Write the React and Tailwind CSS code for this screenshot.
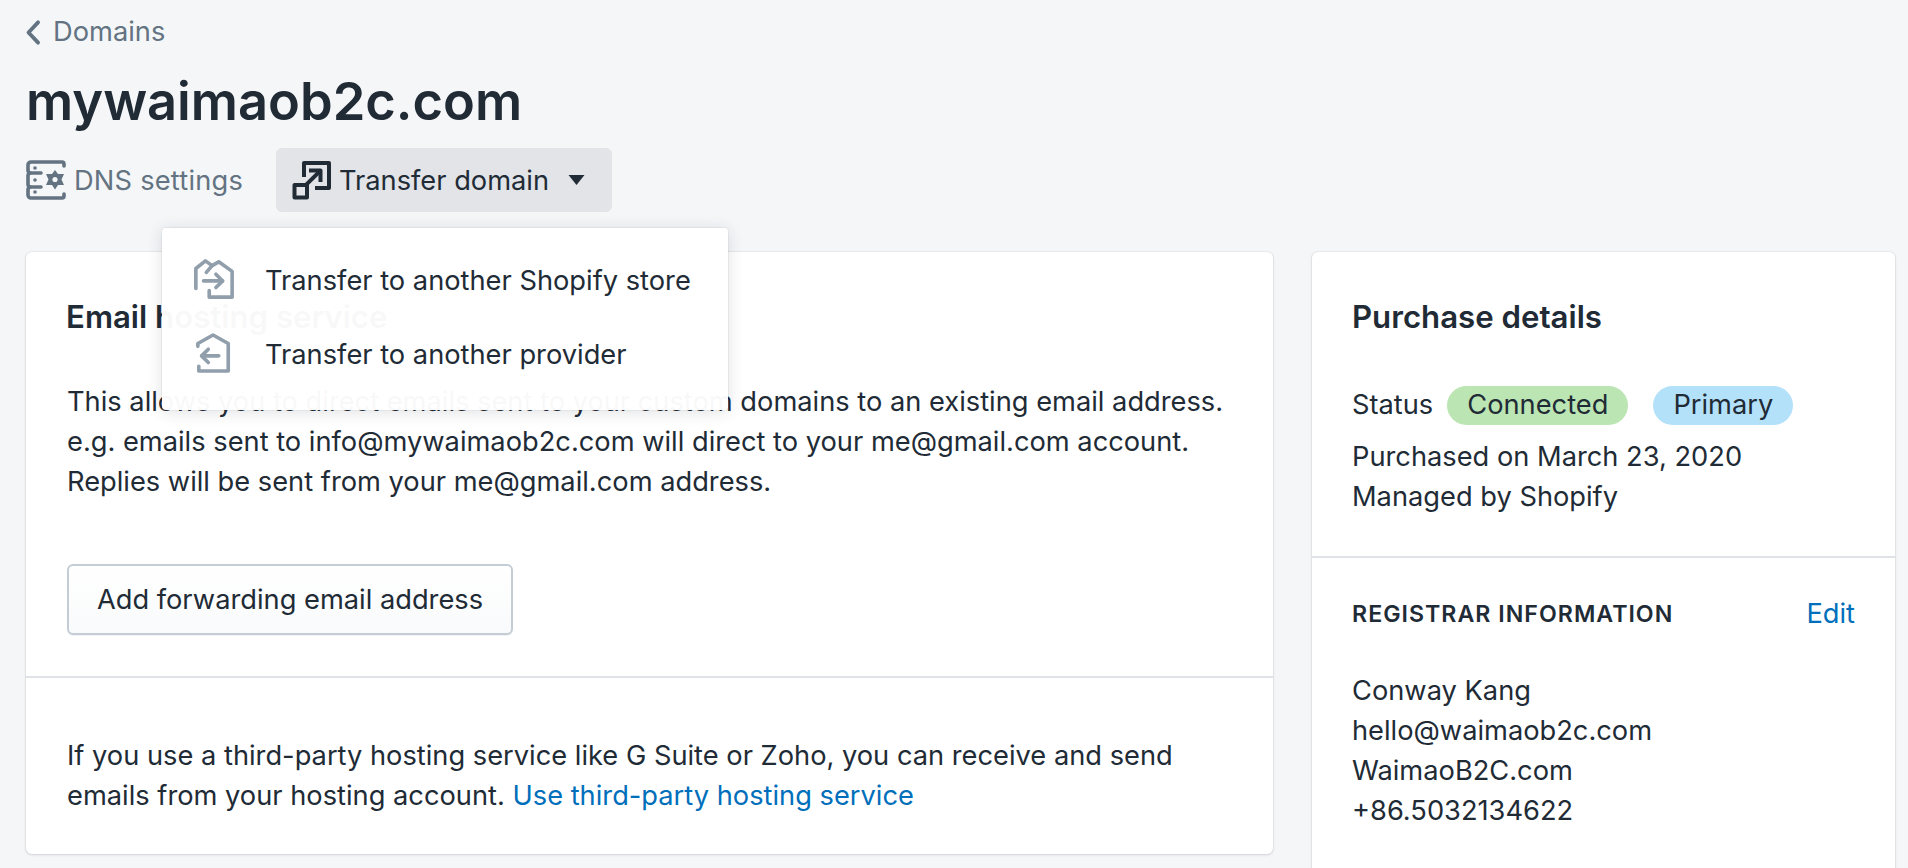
const ink = "text-[#212b36]";

function ChevronLeft() {
  return (
    <svg viewBox="0 0 16 24" className="w-[18px] h-[27px] -ml-[2px] text-[#637381]" fill="none" stroke="currentColor" strokeWidth="3.4" strokeLinecap="round" strokeLinejoin="round">
      <path d="M12.5 3 L4 12 L12.5 21" />
    </svg>
  );
}

function DnsIcon() {
  return (
    <svg viewBox="0 0 40 40" className="w-[40px] h-[40px] text-[#637381]" fill="none" stroke="currentColor" strokeWidth="3.6" strokeLinecap="round" strokeLinejoin="round">
      <path d="M38 6 V4 a2 2 0 0 0 -2 -2 H5 a3 3 0 0 0 -3 3 V10 a3 3 0 0 0 2 3 a3 3 0 0 0 -2 3 V24 a3 3 0 0 0 2 3 a3 3 0 0 0 -2 3 V35 a3 3 0 0 0 3 3 H36 a2 2 0 0 0 2 -2 V34" />
      <path d="M4 13 H15 M4 27 H15" />
      <circle cx="9" cy="8" r="1.8" fill="currentColor" stroke="none" />
      <circle cx="9" cy="20" r="1.8" fill="currentColor" stroke="none" />
      <circle cx="9" cy="32" r="1.8" fill="currentColor" stroke="none" />
      <path d="M29 10 L32 14 L38 14 L35.5 19.5 L38 25 L32 25 L29 29.5 L26 25 L20 25 L22.5 19.5 L20 14 L26 14 Z" fill="currentColor" stroke="none" />
      <circle cx="29" cy="19.5" r="2.6" fill="#f4f6f8" stroke="none" />
    </svg>
  );
}

function TransferIcon() {
  return (
    <svg viewBox="0 0 40 40" className="w-[40px] h-[40px] text-[#212b36]" fill="none" stroke="currentColor" strokeWidth="4" strokeLinejoin="round" strokeLinecap="square">
      <path d="M12 15 V3 H37 V28 H25" />
      <rect x="2.5" y="25" width="12.5" height="12.5" />
      <path d="M15 24 L27.5 11.5" />
      <path d="M19 10.5 H28.5 V20" />
    </svg>
  );
}

function StoreOutIcon() {
  return (
    <svg viewBox="0 0 44 44" className="w-[42px] h-[42px] mb-[4px] text-[#919eab]" fill="none" stroke="currentColor" strokeWidth="3.8" strokeLinecap="round" strokeLinejoin="round">
      <path d="M3 32 V11 L13 3 L20 8 L27 4 L41 14 V41 H17 V34" />
      <path d="M14 15 L20 8" />
      <path d="M11 24 H31" />
      <path d="M24 17 L31 24 L24 31" />
    </svg>
  );
}

function StoreBackIcon() {
  return (
    <svg viewBox="0 0 40 44" className="w-[38px] h-[42px] mb-[4px] text-[#919eab]" fill="none" stroke="currentColor" strokeWidth="3.8" strokeLinecap="round" strokeLinejoin="round">
      <path d="M3 15 V12 L19 3 L35 12 V41 H4 V36" />
      <path d="M7 25 H25" />
      <path d="M14 18 L7 25 L14 32" />
    </svg>
  );
}

function Badge({ bg, children }) {
  return <span className={`${bg} rounded-full h-[39px] px-[20px] flex items-center`}>{children}</span>;
}

export default function App() {
  return (
    <div className={`w-[1908px] h-[868px] overflow-hidden bg-[#f4f6f8] ${ink} text-[27.25px] leading-[40px]`} style={{ fontFamily: "Inter, 'Noto Sans', sans-serif" }}>
      <div className="pl-[26px] pr-[13px] pt-[12px]">
        <div className="flex items-center gap-[8px] h-[40px] text-[#637381]">
          <ChevronLeft />
          <span className="ml-[3px]">Domains</span>
        </div>

        <h1 className="text-[52.4px] leading-[60px] font-semibold mt-[19px]">mywaimaob2c.com</h1>

        <div className="relative flex items-center mt-[17px] h-[64px]">
          <div className="flex items-center gap-[8px] text-[#637381]">
            <DnsIcon />
            <span className="pt-[2px] tracking-[0.2px]">DNS settings</span>
          </div>
          <div className="ml-[33px] flex items-center h-[64px] w-[336px] pl-[16px] bg-[#e2e4e8] rounded-[6px]">
            <TransferIcon />
            <span className="ml-[7px] pt-[2px]">Transfer domain</span>
            <svg viewBox="0 0 16 10" className="w-[17px] h-[10px] ml-[19px] text-[#212b36]" fill="currentColor"><path d="M0 0 H16 L8 10 Z" /></svg>
          </div>

          <div className="absolute left-[136px] top-[80px] w-[566px] h-[182px] z-10 bg-white/[0.97] rounded-[4px] shadow-[0_0_0_1px_rgba(63,63,68,0.05),0_2px_16px_rgba(33,43,54,0.14)] pt-[16px] pl-[31px] flex flex-col">
            <div className="flex items-center h-[74px]">
              <StoreOutIcon />
              <span className="ml-[30px]">Transfer to another Shopify store</span>
            </div>
            <div className="flex items-center h-[74px]">
              <span className="w-[42px] flex justify-center"><StoreBackIcon /></span>
              <span className="ml-[30px]">Transfer to another provider</span>
            </div>
          </div>
        </div>

        <div className="flex gap-[39px] items-start mt-[40px]">
          <div className="w-[1247px] h-[602px] shrink-0 bg-white rounded-[6px] shadow-[0_0_0_1px_rgba(63,63,68,0.05),0_1px_3px_rgba(63,63,68,0.15)] flex flex-col">
            <div className="px-[41px] pt-[45px] h-[426px] border-b-2 border-[#dfe3e8]">
              <h2 className="font-semibold text-[31.2px] leading-[40px] -ml-[1px]">Email hosting service</h2>
              <p className="mt-[45px] whitespace-nowrap">This allows you to direct emails sent to your custom domains to an existing email address.</p>
              <p className="whitespace-nowrap">e.g. emails sent to info@mywaimaob2c.com will direct to your me@gmail.com account.</p>
              <p className="whitespace-nowrap">Replies will be sent from your me@gmail.com address.</p>
              <button className="mt-[62px] w-[446px] h-[71px] rounded-[6px] border-2 border-[#c4cdd5] bg-gradient-to-b from-white to-[#f9fafb] shadow-[0_1px_0_rgba(22,29,37,0.05)]">Add forwarding email address</button>
            </div>
            <div className="px-[41px] pt-[58px]">
              <p className="whitespace-nowrap">If you use a third-party hosting service like G Suite or Zoho, you can receive and send</p>
              <p className="whitespace-nowrap">emails from your hosting account. <span className="text-[#006fbb]">Use third-party hosting service</span></p>
            </div>
          </div>

          <div className="flex-1 h-[700px] bg-white rounded-[6px] shadow-[0_0_0_1px_rgba(63,63,68,0.05),0_1px_3px_rgba(63,63,68,0.15)]">
            <div className="px-[40px] pt-[45px] h-[306px] border-b-2 border-[#dfe3e8]">
              <h2 className="font-semibold text-[31.2px] leading-[40px]">Purchase details</h2>
              <div className="flex items-center gap-[14px] mt-[48px] h-[40px]">
                <span>Status</span>
                <Badge bg="bg-[#bbe5b3]">Connected</Badge>
                <span className="ml-[11px]"><Badge bg="bg-[#b4e1fa]">Primary</Badge></span>
              </div>
              <div className="mt-[12px]">Purchased on March 23, 2020</div>
              <div>Managed by Shopify</div>
            </div>
            <div className="px-[40px] pt-[36px]">
              <div className="flex justify-between items-center h-[40px]">
                <span className="text-[23.2px] font-semibold tracking-[1px]">REGISTRAR INFORMATION</span>
                <span className="text-[#006fbb]">Edit</span>
              </div>
              <div className="mt-[37px]">Conway Kang</div>
              <div>hello@waimaob2c.com</div>
              <div>WaimaoB2C.com</div>
              <div>+86.5032134622</div>
            </div>
          </div>
        </div>
      </div>
    </div>
  );
}
